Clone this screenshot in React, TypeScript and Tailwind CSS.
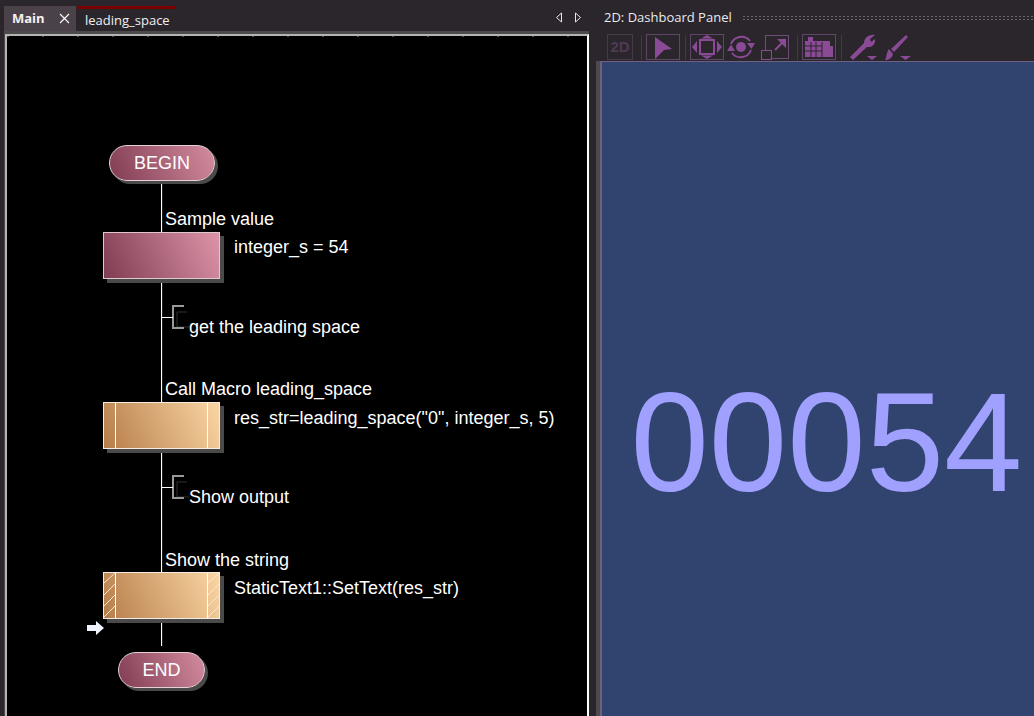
import React from "react";

const sans = "font-['Liberation_Sans',Arial,sans-serif]";
const ui = "font-['Open_Sans','Noto_Sans',sans-serif]";

function Label({ x, y, children }: { x: number; y: number; children: React.ReactNode }) {
  return (
    <div className={`absolute text-[18px] leading-[20px] text-white whitespace-pre ${sans}`} style={{ left: x, top: y }}>
      {children}
    </div>
  );
}

function Terminal({ x, y, w, text }: { x: number; y: number; w: number; text: string }) {
  return (
    <div
      className={`absolute h-[36px] rounded-[18px] border border-[#e4d2d8] bg-[linear-gradient(65deg,#803c52,#d48c9f)] shadow-[3px_3px_0_#4a4a4a] flex items-center justify-center text-white text-[18px] ${sans}`}
      style={{ left: x, top: y, width: w }}
    >
      {text}
    </div>
  );
}

function Box({ y, kind }: { y: number; kind: "plain" | "macro" | "hatched" }) {
  const bg =
    kind === "plain"
      ? "bg-[linear-gradient(65deg,#803c52,#dc94a8)] border-[#e0c8cf]"
      : "bg-[linear-gradient(65deg,#b67d4a,#fad6a4)] border-[#f4ece2]";
  return (
    <div className={`absolute left-[103px] w-[117px] h-[47px] border shadow-[4px_4px_0_#4a4a4a] ${bg}`} style={{ top: y }}>
      {kind !== "plain" && (
        <>
          <div className="absolute left-[11px] top-0 bottom-0 w-px bg-white" />
          <div className="absolute right-[11px] top-0 bottom-0 w-px bg-white" />
        </>
      )}
      {kind === "hatched" && (
        <svg className="absolute inset-0" width="115" height="45" viewBox="0 0 115 45" stroke="#f6e6d2" strokeWidth="1" fill="none">
          <path d="M0 10L11 0M0 22L11 11M0 33L11 22M0 44L11 33M104 10L115 0M104 22L115 11M104 33L115 22M104 44L115 33" />
        </svg>
      )}
    </div>
  );
}

function Bracket({ y }: { y: number }) {
  return (
    <svg className="absolute" style={{ left: 160, top: y }} width="32" height="34" viewBox="0 0 32 34" fill="none">
      <path d="M24 6H14V21H26" stroke="#303030" strokeWidth="1" transform="translate(3 2)" />
      <path d="M24 2H13V24H24" stroke="#999999" strokeWidth="2" />
      <path d="M2 13.5H13" stroke="#ffffff" strokeWidth="1" />
    </svg>
  );
}

const P = "#8a4a96";
const Frame = "h-[26px] w-[34px] border border-[#5d4668] shrink-0";
const Sep = ({ className }: { className: string }) => <div className={`w-px h-[25px] bg-[#3f3b40] shrink-0 ${className}`} />;

export default function App() {
  return (
    <div className="w-[1034px] h-[716px] overflow-hidden flex bg-[#2a262b]">
      {/* Left panel */}
      <div className="w-[596px] h-full flex flex-col shrink-0 pr-[7px] pl-[4px]">
        <div className={`h-[31px] flex items-end relative shrink-0 ${ui}`}>
          <div className="w-[72px] h-[25px] bg-[#4a4248] flex items-center pl-[8px] text-[13px] font-bold text-[#f4f0f4] gap-[14px]">
            <span>Main</span>
            <svg width="11" height="11" viewBox="0 0 11 11" stroke="#ffffff" strokeWidth="1.1"><path d="M1 1L10 10M10 1L1 10" /></svg>
          </div>
          <div className="ml-[2px] w-[97px] h-[25px] border-t-[3px] border-[#7a0000] pl-[7px] text-[13px] leading-[23px] text-[#eef0f4]">
            leading_space
          </div>
          <div className="ml-auto mr-[7px] mb-[8px] flex gap-[11px]">
            <svg width="8" height="11" viewBox="0 0 8 11" fill="none" stroke="#e8e8e8"><path d="M6.5 1L1.5 5.5L6.5 10Z" /></svg>
            <svg width="8" height="11" viewBox="0 0 8 11" fill="none" stroke="#e8e8e8"><path d="M1.5 1L6.5 5.5L1.5 10Z" /></svg>
          </div>
        </div>
        <div className="flex-1 bg-[#4d4a4c] pt-[3px] pl-[1px] min-h-0">
          <div className="h-full border-l-2 border-t-2 border-r-2 border-t-[#b4b4b4] border-l-[#b4b4b4] border-r-white bg-black relative overflow-hidden">
            <div className="absolute top-0 left-0 right-0 h-px bg-[linear-gradient(90deg,#4a4a4a_2px,transparent_2px)] bg-[length:35px_1px]" />
            <div className="absolute inset-[-36px_0_0_-7px]">
              <div className="absolute left-[161px] top-[181px] w-px h-[465px] bg-white" />
              <div className="absolute left-[162px] top-[181px] w-px h-[465px] bg-[#1e1e1e]" />
              <Terminal x={109} y={145} w={106} text="BEGIN" />
              <Label x={165} y={209}>Sample value</Label>
              <Box y={232} kind="plain" />
              <Label x={234} y={237}>integer_s = 54</Label>
              <Bracket y={304} />
              <Label x={189} y={317}>get the leading space</Label>
              <Label x={165} y={379}>Call Macro leading_space</Label>
              <Box y={402} kind="macro" />
              <Label x={234} y={408}>{'res_str=leading_space("0", integer_s, 5)'}</Label>
              <Bracket y={474} />
              <Label x={189} y={487}>Show output</Label>
              <Label x={165} y={550}>Show the string</Label>
              <Box y={572} kind="hatched" />
              <Label x={234} y={578}>StaticText1::SetText(res_str)</Label>
              <svg className="absolute left-[87px] top-[620px]" width="18" height="16" viewBox="0 0 18 16" fill="#eef2fa">
                <path d="M0 5H9V1L17 8L9 15V11H0Z" />
              </svg>
              <Terminal x={118} y={652} w={87} text="END" />
            </div>
          </div>
        </div>
      </div>

      {/* Right panel */}
      <div className="flex-1 h-full flex flex-col min-w-0">
        <div className={`h-[33px] shrink-0 flex items-center pl-[8px] pt-[3px] gap-[10px] text-[13px] text-[#e8eaf0] ${ui}`}>
          <span className="whitespace-nowrap">2D: Dashboard Panel</span>
          <div className="flex-1 h-[6px] bg-[radial-gradient(#6a666b_1px,transparent_1px)] bg-[length:4px_3px]" />
        </div>
        <div className="h-[28px] shrink-0 flex items-center pl-[11px]">
          <div className="h-[26px] w-[26px] shrink-0 border border-[#453a49] flex items-center justify-center">
            <span className={`text-[15px] font-bold text-[#4f3a55] ${sans}`}>2D</span>
          </div>
          <Sep className="ml-[8px]" />
          <div className={`${Frame} ml-[4px]`}>
            <svg width="32" height="24" viewBox="0 0 32 24" fill={P}><path d="M8 2L25 14L17 15L8 24Z" /></svg>
          </div>
          <Sep className="ml-[5px]" />
          <div className={`${Frame} ml-[4px]`}>
            <svg width="32" height="24" viewBox="0 0 32 24" fill={P}>
              <path d="M16 0L22 3.5H10ZM16 24L22 20.5H10ZM1 12L6 6V18ZM31 12L26 6V18Z" />
              <rect x="9" y="5" width="14" height="14" fill="none" stroke={P} strokeWidth="2" />
            </svg>
          </div>
          <svg className="ml-[2px] shrink-0" width="30" height="26" viewBox="0 0 30 26" fill="none" stroke={P} strokeWidth="2">
            <circle cx="15" cy="13" r="5" fill={P} stroke="none" />
            <path d="M5 10A11 11 0 0 1 24 7" />
            <path d="M25 16A11 11 0 0 1 6 19" />
            <path d="M21 9H29L25.5 15Z" fill={P} stroke="none" />
            <path d="M1 17H9L5 10.5Z" fill={P} stroke="none" />
          </svg>
          <svg className="ml-[5px] shrink-0" width="29" height="26" viewBox="0 0 29 26" fill="none">
            <rect x="4.5" y="1.5" width="23" height="23" stroke="#6c4d79" strokeWidth="1" />
            <rect x="0.5" y="16.5" width="10" height="9" fill="#2a262b" stroke={P} strokeWidth="1" />
            <path d="M14 16L23 7" stroke={P} strokeWidth="2.2" />
            <path d="M16 5H25V14Z" fill={P} />
          </svg>
          <Sep className="ml-[7px]" />
          <div className={`${Frame} ml-[4px]`}>
            <svg width="32" height="24" viewBox="0 0 32 24" fill={P}>
              <path d="M5 2H10V6H27V11H30V22H2V6H5Z" />
              <path d="M2 11H19M2 16H19M8 7V22M13 7V22M19 7V22" stroke="#2a262b" strokeWidth="1" fill="none" />
            </svg>
          </div>
          <Sep className="ml-[5px]" />
          <svg className="ml-[8px] shrink-0" width="27" height="26" viewBox="0 0 27 26" fill={P}>
            <path d="M0 23L14 9C14 4 19 0 25 1L20 5L21 8L25 5C26 10 22 14 17 13L3 26Z" />
            <path d="M17 22H27L22 26Z" />
          </svg>
          <svg className="ml-[7px] shrink-0" width="27" height="26" viewBox="0 0 27 26" fill={P}>
            <path d="M22 1L24 3L10 18L7 15Z" />
            <path d="M5 15L9 20C8 24 5 26 1 26C3 23 2 19 5 15Z" />
            <path d="M16 22H27L21.5 26Z" />
          </svg>
        </div>
        <div className="flex-1 min-h-0 bg-[#4d4a4c] pl-[4px] flex flex-col">
          <div className="flex-1 min-h-0 border-t border-l-2 border-[#6f5f80] bg-[#31446f] flex items-center justify-center overflow-hidden pt-[106px] pl-[17px]">
            <span className={`text-[141px] leading-none text-[#a0a0ff] ${sans}`}>00054</span>
          </div>
        </div>
      </div>
    </div>
  );
}
